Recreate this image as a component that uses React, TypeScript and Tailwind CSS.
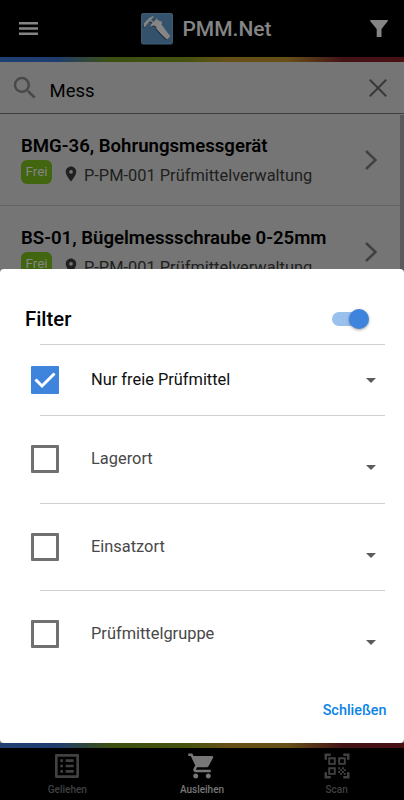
import React from "react";
import {
  MdArrowDropDown,
  MdOutlineListAlt,
  MdPlace,
  MdQrCodeScanner,
  MdSearch,
  MdShoppingCart,
} from "react-icons/md";

const items = [
  { title: "BMG-36, Bohrungsmessgerät", location: "P-PM-001 Prüfmittelverwaltung" },
  { title: "BS-01, Bügelmessschraube 0-25mm", location: "P-PM-001 Prüfmittelverwaltung" },
];

const filters = ["Lagerort", "Einsatzort", "Prüfmittelgruppe"];

function Stripe() {
  return (
    <div className="h-[5px] shrink-0 bg-[linear-gradient(90deg,#1f4072_0%,#1f3c70_14%,#3c5010_27%,#44520f_45%,#665018_57%,#665018_71%,#441216_85%,#4a1014_100%)]" />
  );
}

// two jaws, the thin rail between them and the beam
function Caliper() {
  return (
    <>
      <path d="M2.700 14v-3.500L8 5l4-2 .8 1.300-4.300 4.200L4 14z" />
      <path d="m8.800 14.500 1.200-3.200L14 7.500l1.500-2.500 1.300 2.300 4 1.200.2 2-1.500 2.500-3.500 2-2.500-2.500-2.500.5z" />
      <path d="m9.500 6.500 3 2.300-1 1.200-3-2.300z" />
      <path d="m17.500 11.500 2-1.500L24.500 17l4.500 5.800-.5 1.700-2.500 2.200L20 21l-5-5.500z" />
    </>
  );
}

function Logo() {
  return (
    <svg viewBox="0 0 32 32" className="size-8">
      <rect x="0.5" y="0.5" width="31" height="30.5" rx="1.5" fill="#34526c" stroke="#3f5c75" />
      <g fill="#18232d" transform="translate(-0.5 0.8)">
        <Caliper />
      </g>
      <g fill="#858585">
        <Caliper />
      </g>
    </svg>
  );
}

function Header() {
  return (
    <header className="flex h-[57px] shrink-0 items-center justify-between bg-black pr-4 pl-[19px] text-[#858585]">
      <svg viewBox="0 0 19 13" className="h-[13px] w-[19px]" fill="currentColor">
        <path d="M0 0h19v2.500H0zM0 5.200h19v2.500H0zM0 10.400h19v2.500H0z" />
      </svg>
      <div className="ml-[5px] flex items-center gap-[9px]">
        <Logo />
        <h1 className="text-[21px] leading-8 font-medium">PMM.Net</h1>
      </div>
      <svg viewBox="0 0 18 18" className="size-[18px]" fill="currentColor">
        <path d="M.5 0h17q.7.5.2 1.200L11.500 9v8H6.700V9L.300 1.200Q0 .4.500 0z" />
      </svg>
    </header>
  );
}

function SearchBar() {
  return (
    <div className="flex h-[52px] shrink-0 items-center border-b border-[#3c3f3f] px-[10px]">
      <MdSearch className="size-[30px] text-[#484848]" />
      <span className="mt-[7px] ml-[9.500px] grow text-[18.500px] leading-7 text-black">Mess</span>
      <svg viewBox="0 0 18 18" className="mr-[7px] size-[18px]" fill="none" stroke="#383838" strokeWidth="2">
        <path d="m.8.8 16.400 16.400M17.200.8.800 17.200" />
      </svg>
    </div>
  );
}

function ListItem({ title, location }: { title: string; location: string }) {
  return (
    <div className="flex h-[92px] shrink-0 items-center justify-between border-b border-[#636363] pr-[27px] pl-[21px]">
      <div className="mt-[5px] flex flex-col">
        <span className="text-[18.600px] leading-6 font-semibold text-black">{title}</span>
        <div className="flex h-8 items-start">
          <span className="mt-0.5 flex h-6 w-[31px] items-center justify-center rounded-[6px] bg-[#426510] pb-px text-[13.500px] text-[#858585]">
            Frei
          </span>
          <MdPlace className="mt-[7px] ml-[10px] size-[18px] text-[#202020]" />
          <span className="mt-1.5 ml-1 text-[16.400px] leading-6 text-[#202020]">{location}</span>
        </div>
      </div>
      <svg viewBox="0 0 12 20" className="h-5 w-3" fill="none" stroke="#414141" strokeWidth="2.5">
        <path d="m1 1 9.500 9L1 19" />
      </svg>
    </div>
  );
}

function FilterRow({ label }: { label: string }) {
  return (
    <div className="flex h-[87.500px] items-center pr-[21px] pb-px pl-[31px]">
      <span className="size-7 rounded-[1px] border-3 border-[#707070]" />
      <span className="mt-px ml-8 grow text-[16.400px] text-[#484848]">{label}</span>
      <MdArrowDropDown className="mt-4 size-6 text-[#5b5b5b]" />
    </div>
  );
}

function Divider() {
  return <div className="-mt-px mr-[19px] ml-10 h-px bg-[#cfcfcf]" />;
}

function FilterSheet() {
  return (
    <section className="absolute inset-x-0 top-[269px] flex h-[474px] flex-col rounded-[4px] bg-white">
      <div className="flex h-[76px] items-end justify-between pr-9 pb-3 pl-[25px]">
        <h2 className="text-[20.300px] leading-7 font-medium text-black">Filter</h2>
        <span className="relative mb-[7px] h-3.5 w-9 rounded-full bg-[#9ac1ee]">
          <span className="absolute -top-[3px] -right-px size-5 rounded-full bg-[#3f84dc] shadow-[0_1px_3px_rgba(0,0,0,0.4)]" />
        </span>
      </div>
      <Divider />
      <div className="flex h-[71px] items-center pr-[21px] pb-0.5 pl-[31px]">
        <span className="flex size-7 items-center justify-center rounded-[1px] bg-[#3f84dc]">
          <svg viewBox="0 0 28 28" className="size-7" fill="none" stroke="white" strokeWidth="3">
            <path d="m4.500 13.500 6.500 6.500L23.500 7.500" />
          </svg>
        </span>
        <span className="mt-0.5 ml-8 grow text-[16.400px] text-[#101010]">Nur freie Prüfmittel</span>
        <MdArrowDropDown className="size-6 text-[#5b5b5b]" />
      </div>
      <Divider />
      {filters.map((label, i) => (
        <React.Fragment key={label}>
          <FilterRow label={label} />
          {i < filters.length - 1 && <Divider />}
        </React.Fragment>
      ))}
      <button className="mt-[22px] mr-[17.500px] self-end text-[14.400px] leading-5 font-medium text-[#0b84e8]">
        Schließen
      </button>
    </section>
  );
}

function BottomNav() {
  return (
    <nav className="grid h-[52px] shrink-0 grid-cols-3 bg-black text-[10px] leading-4 font-medium text-[#414141]">
      <div className="flex flex-col items-center pt-0.5">
        <MdOutlineListAlt className="size-8" />
        <span>Geliehen</span>
      </div>
      <div className="flex flex-col items-center pt-0.5 text-[#777]">
        <MdShoppingCart className="my-px size-[30px]" />
        <span>Ausleihen</span>
      </div>
      <div className="flex flex-col items-center pt-0.5">
        <MdQrCodeScanner className="my-px size-[30px]" />
        <span>Scan</span>
      </div>
    </nav>
  );
}

export default function App() {
  return (
    <div className="relative flex h-[800px] w-[404px] flex-col overflow-hidden bg-[#757575] font-['Roboto',sans-serif]">
      <Header />
      <Stripe />
      <SearchBar />
      <main className="flex min-h-0 grow overflow-hidden">
        <div className="flex grow flex-col">
          {items.map((item) => (
            <ListItem key={item.title} {...item} />
          ))}
        </div>
        <div className="mt-px -ml-1 w-1 bg-[#595959]" />
      </main>
      <Stripe />
      <BottomNav />
      <FilterSheet />
    </div>
  );
}
